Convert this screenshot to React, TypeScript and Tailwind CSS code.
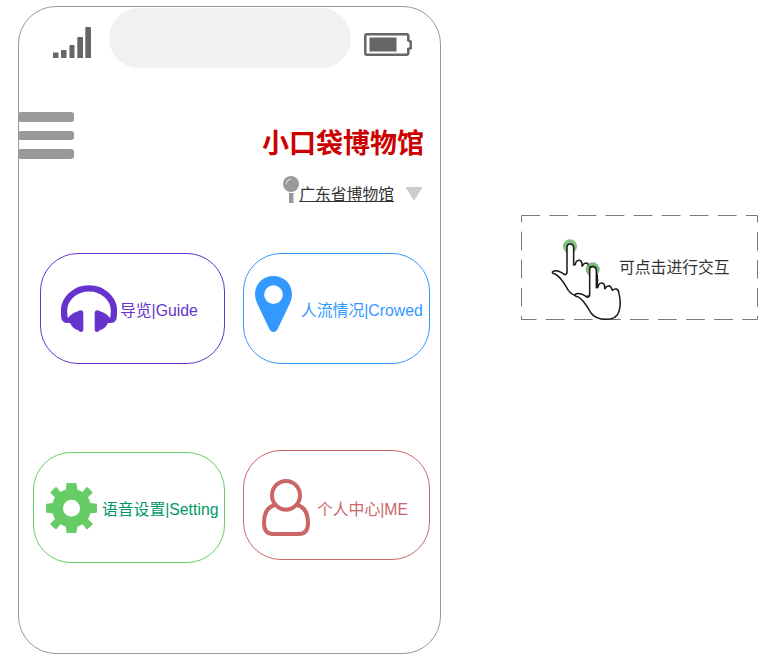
import React from "react";

const FONT = "font-['Liberation_Sans','Noto_Sans_CJK_SC',sans-serif]";

function Signal() {
  return (
    <svg width="38" height="31" viewBox="0 0 38 31" fill="#666" className="block">
      <rect x="0" y="25.5" width="5.5" height="5.5" rx=".5" />
      <rect x="8" y="23" width="5.5" height="8" rx=".5" />
      <rect x="16.5" y="18" width="5" height="13" rx=".5" />
      <rect x="24.3" y="10" width="5.7" height="21" rx=".5" />
      <rect x="32.3" y="0" width="5.7" height="31" rx=".5" />
    </svg>
  );
}

function Battery() {
  return (
    <svg width="48" height="23" viewBox="0 0 48 23" className="block">
      <path
        d="M3 1.3H42.5Q44.3 1.3 44.3 3V7.2L46.7 8.7V15.2L44.3 16V20Q44.3 21.7 42.5 21.7H3Q1.3 21.7 1.3 20V3Q1.3 1.3 3 1.3Z"
        fill="none"
        stroke="#666"
        strokeWidth="2.5"
      />
      <rect x="5.5" y="4.5" width="27" height="14" fill="#666" />
    </svg>
  );
}

function Pin() {
  return (
    <svg width="16" height="27" viewBox="0 0 16 27" className="block">
      <rect x="6" y="17" width="4.5" height="10" fill="#999" />
      <circle cx="8" cy="8" r="8" fill="#999" />
      <path d="M3.2 8.5A5 5 0 0 1 8 3.2" fill="none" stroke="#d5d5d5" strokeWidth="1.3" />
    </svg>
  );
}

function Headphones() {
  return (
    <svg width="56" height="47" viewBox="0 0 168 141" className="block">
      <path d="M12 105Q9 91 9 78A75 68 0 0 1 159 78Q159 91 156 105" fill="none" stroke="#6633cc" strokeWidth="19" />
      <path
        d="M4 98H22Q30 86 51 79Q55 76 60 76Q67 77 67 84V134Q67 141 60 141Q55 141 52 136Q35 131 27 114Q13 115 7 111ZM164 98H146Q138 86 117 79Q113 76 108 76Q101 77 101 84V134Q101 141 108 141Q113 141 116 136Q133 131 141 114Q155 115 161 111Z"
        fill="#6633cc"
      />
    </svg>
  );
}

function MapMarker() {
  return (
    <svg width="37" height="56" viewBox="0 0 111 168" className="block">
      <path
        fillRule="evenodd"
        fill="#3399ff"
        d="M55.500 0C24 0 0 24 0 55Q0 70 7 83L43 159Q47 168 55.500 168T68 159L104 83Q111 70 111 55C111 24 87 0 55.500 0ZM55.500 28A28 28 0 1 1 55.500 84A28 28 0 1 1 55.500 28Z"
      />
    </svg>
  );
}

function Gear() {
  return (
    <svg width="51" height="50" viewBox="0 0 153 150" className="block">
      <path
        fillRule="evenodd"
        fill="#66cc66"
        d="M62 0H91Q93 11 94 20Q103 23 110 27L121 13Q123 12 125 13L139 27Q140 29 139 31L126 43Q131 51 133 60L151 62Q153 63 153 65V87Q153 89 151 89L133 91Q131 100 126 108L139 121Q140 123 139 125L125 138Q123 140 121 138L110 124Q103 128 94 131L91 150H62L59 131Q50 128 43 124L32 138Q30 140 28 138L14 125Q13 123 14 121L27 108Q22 100 20 91L2 89Q0 89 0 87V65Q0 63 2 62L20 60Q22 51 27 43L14 31Q13 29 14 27L28 13Q30 12 32 13L43 27Q50 23 59 20Q60 11 62 0ZM76.500 50A25.500 25.500 0 1 0 76.500 101A25.500 25.500 0 1 0 76.500 50Z"
      />
    </svg>
  );
}

function Person() {
  return (
    <svg width="48" height="57" viewBox="0 0 144 171" className="block" fill="none" stroke="#cc6666" strokeWidth="12">
      <ellipse cx="72" cy="49" rx="42" ry="43" />
      <path d="M40 78Q6 85 6 132Q6 165 34 165H110Q138 165 138 132Q138 85 104 78" />
    </svg>
  );
}

const HAND =
  "M134 117Q136 109 144 110Q153 111 154 120V173Q160 174 160 166Q164 158 171 159Q178 160 179 169V175Q180 178 181 174Q185 167 192 167Q199 169 202 181Q207 176 214 177Q221 179 221 187Q229 216 223 241Q217 268 182 268Q152 268 138 249Q127 229 114 213Q107 206 100 201Q90 199 90 194Q97 188 109 192Q118 195 127 202Q134 202 134 193Z";

function TapHands() {
  return (
    <svg width="90" height="95" viewBox="0 0 270 285" className="block" strokeLinejoin="round">
      <circle cx="75" cy="49" r="21" fill="#80c080" />
      <path d={HAND} transform="translate(-68 -68)" fill="#fff" stroke="#1a1a1a" strokeWidth="4.6" />
      <circle cx="143" cy="118" r="21" fill="#4fa44f" fillOpacity=".75" />
      <path d={HAND} fill="#fff" stroke="#1a1a1a" strokeWidth="4.6" />
    </svg>
  );
}

export default function App() {
  return (
    <div className={`flex h-[661px] w-[777px] items-start overflow-hidden bg-white pt-[6px] pl-[18px] text-[15.8px] leading-5 ${FONT}`}>
      <main className="h-[648px] w-[423px] shrink-0 rounded-[38px] border border-[#999]">
        <header className="flex h-[61px] items-start pt-px">
          <div className="mt-[19px] ml-[34px]"><Signal /></div>
          <div className="ml-[18px] h-[60px] w-[242px] rounded-[30px] bg-[#f1f1f1]" />
          <div className="mt-[25px] ml-[13px]"><Battery /></div>
        </header>

        <div className="flex h-[185px] items-start justify-between">
          <div className="mt-[44px] -ml-px flex h-[47px] w-[56px] flex-col justify-between">
            <div className="h-[10px] rounded-[3px] bg-[#999]" />
            <div className="h-[9px] rounded-[3px] bg-[#999]" />
            <div className="h-[10px] rounded-[3px] bg-[#999]" />
          </div>
          <div className="mr-[16px] flex flex-col items-end pt-[56px]">
            <h1 className="h-[40px] text-[27px] leading-[40px] font-bold whitespace-nowrap text-[#cc0000]">小口袋博物馆</h1>
            <div className="mt-[12px] mr-[2px] flex items-start">
              <Pin />
              <span className="mt-[9px] whitespace-nowrap text-[#333] underline">广东省博物馆</span>
              <svg width="16" height="13" viewBox="0 0 16 13" className="mt-[11px] ml-[12px] block">
                <path d="M.5 0H15.500L16 1L8.500 13H7.500L0 1Z" fill="#ccc" />
              </svg>
            </div>
          </div>
        </div>

        <div className="flex items-start pl-[21px]">
          <div className="flex h-[111px] w-[185px] items-center rounded-[38px] border border-[#6633cc] pl-5 text-[#6633cc]">
            <Headphones />
            <span className="mt-[4px] ml-[3px] whitespace-nowrap">导览|Guide</span>
          </div>
          <div className="ml-[18px] flex h-[111px] w-[187px] items-start rounded-[38px] border border-[#3399ff] pt-[22px] pl-[11px] text-[#3399ff]">
            <MapMarker />
            <span className="mt-[25px] ml-[9px] whitespace-nowrap">人流情况|Crowed</span>
          </div>
        </div>

        <div className="mt-[86px] flex items-start pl-[14px]">
          <div className="mt-[2px] flex h-[111px] w-[192px] items-center rounded-[38px] border border-[#66cc66] pl-[12px] text-[#009966]">
            <Gear />
            <span className="mt-[4px] ml-[5px] whitespace-nowrap">语音设置|Setting</span>
          </div>
          <div className="ml-[18px] flex h-[110px] w-[187px] items-start rounded-[38px] border border-[#cc6666] pt-[28px] pl-[18px] text-[#cc6666]">
            <Person />
            <span className="mt-[21px] ml-[7px] whitespace-nowrap">个人中心|ME</span>
          </div>
        </div>
      </main>

      <aside className="relative mt-[209px] ml-[80px] flex h-[105px] w-[237px] items-start">
        <svg width="237" height="105" viewBox="0 0 237 105" className="absolute inset-0 block">
          <rect x=".5" y=".5" width="236" height="104" fill="none" stroke="#797979" strokeDasharray="18.700 9.350" />
        </svg>
        <div className="relative mt-[15px] ml-[24px]"><TapHands /></div>
        <span className="mt-[43px] -ml-[16px] whitespace-nowrap text-[#333]">可点击进行交互</span>
      </aside>
    </div>
  );
}
